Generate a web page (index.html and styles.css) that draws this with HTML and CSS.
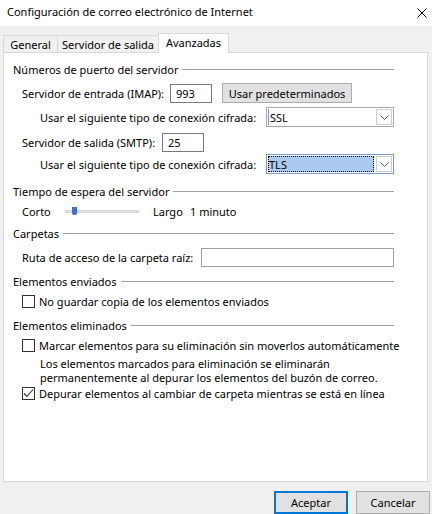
FILE: index.html
```html
<!DOCTYPE html>
<html lang="es">
<head>
    <meta charset="UTF-8">
    <title>Configuración de correo electrónico de Internet</title>
    <link rel="stylesheet" href="styles.css">
</head>
<body>
    <div class="window">
        <div class="titlebar">
            <span class="title">Configuración de correo electrónico de Internet</span>
            <svg class="close" width="10" height="10" viewBox="0 0 10 10">
                <path d="M0.5 0.5 L9.5 9.5 M9.5 0.5 L0.5 9.5" stroke="#000" stroke-width="1" fill="none"/>
            </svg>
        </div>

        <div class="tabs">
            <div class="tab t-general">General</div>
            <div class="tab t-outgoing">Servidor de salida</div>
            <div class="tab t-advanced active">Avanzadas</div>
        </div>

        <div class="panel">
            <div class="group g-ports">Números de puerto del servidor</div>
            <div class="row r-imap">
                <span class="label w-imap">Servidor de entrada (IMAP):</span>
                <div class="textbox port">993</div>
                <button class="btn btn-defaults">Usar predeterminados</button>
            </div>
            <div class="row r-cipher1 sub">
                <span class="label w-cipher">Usar el siguiente tipo de conexión cifrada:</span>
                <div class="select">
                    <span class="value caret">SSL</span>
                    <span class="arrow"><svg width="9" height="5" viewBox="0 0 9 5"><path d="M0.5 0.5 L4.5 4.5 L8.5 0.5" stroke="#555" fill="none"/></svg></span>
                </div>
            </div>
            <div class="row r-smtp">
                <span class="label w-smtp">Servidor de salida (SMTP):</span>
                <div class="textbox port">25</div>
            </div>
            <div class="row r-cipher2 sub">
                <span class="label w-cipher">Usar el siguiente tipo de conexión cifrada:</span>
                <div class="select focused">
                    <span class="value">TLS</span>
                    <span class="arrow"><svg width="9" height="5" viewBox="0 0 9 5"><path d="M0.5 0.5 L4.5 4.5 L8.5 0.5" stroke="#555" fill="none"/></svg></span>
                </div>
            </div>

            <div class="group g-timeout">Tiempo de espera del servidor</div>
            <div class="row r-slider">
                <span class="label w-short">Corto</span>
                <div class="slider"><span class="thumb"></span></div>
                <span class="label w-long">Largo</span>
                <span class="label">1 minuto</span>
            </div>

            <div class="group g-folders">Carpetas</div>
            <div class="row r-path">
                <span class="label w-path">Ruta de acceso de la carpeta raíz:</span>
                <div class="textbox wide"></div>
            </div>

            <div class="group g-sent">Elementos enviados</div>
            <label class="row check r-nosave">
                <span class="box"></span>
                <span>No guardar copia de los elementos enviados</span>
            </label>

            <div class="group g-deleted">Elementos eliminados</div>
            <label class="row check r-mark">
                <span class="box"></span>
                <span>Marcar elementos para su eliminación sin moverlos automáticamente</span>
            </label>
            <p class="note">Los elementos marcados para eliminación se eliminarán<br>permanentemente al depurar los elementos del buzón de correo.</p>
            <label class="row check r-purge">
                <span class="box checked">
                    <svg width="11" height="11" viewBox="0 0 11 11"><path d="M1 5.5 L4 8.5 L10 1.5" stroke="#333" stroke-width="1.1" fill="none"/></svg>
                </span>
                <span>Depurar elementos al cambiar de carpeta mientras se está en línea</span>
            </label>
        </div>

        <div class="footer">
            <button class="btn btn-dialog btn-primary">Aceptar</button>
            <button class="btn btn-dialog">Cancelar</button>
        </div>
    </div>
</body>
</html>
```

FILE: styles.css
```css
/* Dialog base */
body {
    margin: 0;
    background-color: #f0f0f0;
    color: #000;
    font-family: "Noto Sans", "DejaVu Sans", sans-serif;
    font-size: 11px;
    overflow: hidden;
    white-space: nowrap;
}

.window {
    width: 432px;
    height: 514px;
    display: flex;
    flex-direction: column;
}

.titlebar {
    height: 26px;
    background: #fff;
    display: flex;
    align-items: center;
    justify-content: space-between;
    padding: 0 5px 4px 7px;
    box-sizing: border-box;
}

.title {
    font-size: 11px;
}

.close {
    margin-top: 4px;
}

/* Tabs */
.tabs {
    display: flex;
    align-items: flex-end;
    height: 19px;
    margin-top: 7px;
    padding-left: 3px;
}

.tab {
    height: 17px;
    box-sizing: border-box;
    border: 1px solid #d9d9d9;
    border-bottom: none;
    display: flex;
    align-items: center;
    justify-content: center;
    line-height: 1;
}

.tab + .tab {
    margin-left: -1px;
}

.t-general { width: 55px; }
.t-outgoing { width: 102px; }
.t-advanced { width: 71px; }

.tab.active {
    position: relative;
    z-index: 1;
    height: 20px;
    margin-bottom: -1px;
    padding-bottom: 2px;
    background: #fff;
}

/* Page panel */
.panel {
    height: 430px;
    box-sizing: border-box;
    margin: 0 4px 0 3px;
    padding: 8px 33px 0 9px;
    border: 1px solid #d9d9d9;
    background: #fff;
}

.group {
    display: flex;
    align-items: center;
    height: 16px;
    gap: 4px;
}

.group::after {
    content: '';
    flex: 1;
    height: 1px;
    background: #a0a0a0;
}

.row {
    display: flex;
    align-items: center;
    height: 20px;
    padding-left: 9px;
}

.row.sub {
    padding-left: 27px;
}

.label {
    white-space: nowrap;
    flex: none;
}

.w-imap { width: 148px; }
.w-smtp { width: 140px; }
.w-cipher { width: 226px; }
.w-path { width: 179px; }
.w-short { width: 43px; }
.w-long { width: 37px; }

/* vertical rhythm */
.r-imap { margin-top: 6px; }
.r-cipher1 { margin-top: 4px; }
.r-smtp { margin-top: 5px; }
.r-cipher2 { margin-top: 2px; }
.g-timeout { margin-top: 9px; }
.r-slider { margin-top: 2px; }
.g-folders { margin-top: 4px; }
.r-path { margin-top: 6px; }
.g-sent { margin-top: 6px; }
.r-nosave { margin-top: 4px; }
.g-deleted { margin-top: 8px; }
.r-mark { margin-top: 4px; }

/* Controls */
.textbox {
    height: 19px;
    box-sizing: border-box;
    border: 1px solid #7a7a7a;
    background: #fff;
    padding: 0 5px;
    display: flex;
    align-items: center;
}

.textbox.port {
    width: 42px;
}

.textbox.wide {
    width: 193px;
    border-color: #a0a0a0;
}

.btn {
    font-family: inherit;
    font-size: 11px;
    color: #000;
    background: #e1e1e1;
    border: 1px solid #adadad;
    padding: 0;
    margin: 0;
    box-sizing: border-box;
}

.btn-defaults {
    width: 130px;
    height: 20px;
    margin-left: 10px;
}

.select {
    width: 128px;
    height: 20px;
    box-sizing: border-box;
    border: 1px solid #a9a9a9;
    background: #fff;
    display: flex;
    align-items: stretch;
    padding: 1px;
}

.select .value {
    flex: 1;
    display: flex;
    align-items: center;
    padding-left: 1px;
}

.select .caret {
    border-left: 1px solid #6f9fd8;
}

.select.focused {
    border-color: #7a9cc8;
}

.select.focused .value {
    background: #aacaef;
    outline: 1px dotted #000;
    outline-offset: -1px;
    margin-right: 2px;
}

.arrow {
    width: 16px;
    box-sizing: border-box;
    border: 1px solid #cfcfcf;
    background: #fdfdfd;
    display: flex;
    align-items: center;
    justify-content: center;
}

.slider {
    width: 74px;
    height: 3px;
    background: #e6e6e6;
    border: 1px solid #d6d6d6;
    box-sizing: border-box;
    position: relative;
    margin-right: 14px;
}

.thumb {
    position: absolute;
    left: 6px;
    top: -4px;
    width: 5px;
    height: 8px;
    background: #3f6fd6;
    border-radius: 0 0 2px 2px;
}

.check {
    height: 16px;
    gap: 4px;
    padding-left: 9px;
}

.box {
    width: 13px;
    height: 13px;
    box-sizing: border-box;
    border: 1px solid #333;
    background: #fff;
    display: flex;
    align-items: center;
    justify-content: center;
    flex: none;
}

.note {
    margin: 4px 0 0 27px;
    line-height: 14px;
}

/* Footer buttons */
.footer {
    display: flex;
    justify-content: flex-end;
    gap: 8px;
    margin-top: 9px;
    padding-right: 2px;
}

.btn-dialog {
    width: 74px;
    height: 23px;
}

.btn-primary {
    border: 2px solid #0078d7;
}
```
